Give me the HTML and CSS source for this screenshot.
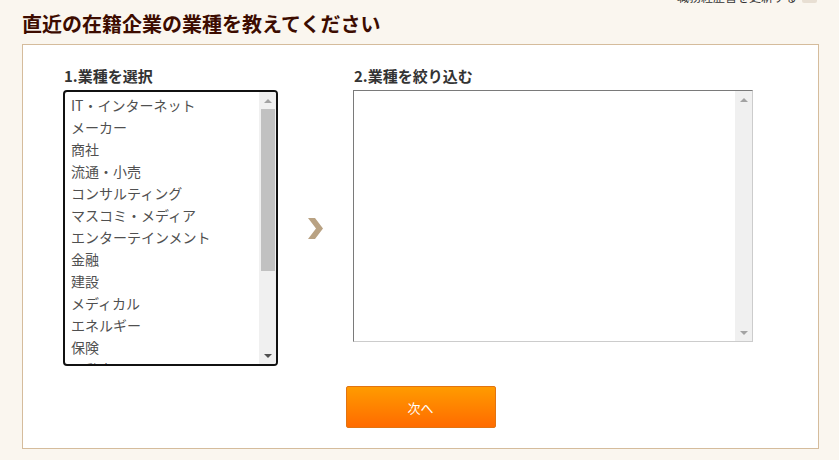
FILE: index.html
```html
<!DOCTYPE html>
<html lang="ja">
<head>
    <meta charset="UTF-8">
    <title>業種選択</title>
    <link rel="stylesheet" href="styles.css">
</head>
<body>
<div class="page">
    <!-- 上部リンク（切れている） -->
    <div class="topnav">
        <span class="topLink">職務経歴書を更新する</span>
        <span class="topIcon"></span>
    </div>
    <h1 class="title">直近の在籍企業の業種を教えてください</h1>

    <div class="panel">
        <div class="selectors">
            <!-- 1.業種 -->
            <div class="col col1">
                <div class="label">1.業種を選択</div>
                <div class="listbox focused">
                    <ul class="options">
                        <li>IT・インターネット</li>
                        <li>メーカー</li>
                        <li>商社</li>
                        <li>流通・小売</li>
                        <li>コンサルティング</li>
                        <li>マスコミ・メディア</li>
                        <li>エンターテインメント</li>
                        <li>金融</li>
                        <li>建設</li>
                        <li>メディカル</li>
                        <li>エネルギー</li>
                        <li>保険</li>
                        <li>不動産</li>
                    </ul>
                    <div class="scrollbar">
                        <div class="sbBtn"><span class="triUp"></span></div>
                        <div class="thumb"></div>
                        <div class="sbTrack"></div>
                        <div class="sbBtn"><span class="triDown dark"></span></div>
                    </div>
                </div>
            </div>

            <!-- 矢印 -->
            <div class="arrow">
                <svg width="15" height="21" viewBox="0 0 15 21">
                    <path d="M0 0 H7 L15 10.5 L7 21 H0 L8 10.5 Z" fill="#b9a283"/>
                </svg>
            </div>

            <!-- 2.絞り込み -->
            <div class="col col2">
                <div class="label">2.業種を絞り込む</div>
                <div class="listbox plain">
                    <ul class="options"></ul>
                    <div class="scrollbar">
                        <div class="sbBtn"><span class="triUp"></span></div>
                        <div class="sbTrack"></div>
                        <div class="sbBtn"><span class="triDown"></span></div>
                    </div>
                </div>
            </div>
        </div>

        <div class="actions">
            <button class="nextBtn">次へ</button>
        </div>
    </div>
</div>
</body>
</html>
```

FILE: styles.css
```css
body{
    margin: 0;
    background: #faf6ef;
    font-family: "Noto Sans CJK JP", "Noto Sans", sans-serif;
    color: #333;
}
.page{
    padding: 0 20px 0 22px;
}
/* 上部リンク */
.topnav{
    height: 3px;
    overflow: hidden;
    display: flex;
    justify-content: flex-end;
    align-items: flex-end;
    gap: 5px;
    padding-right: 2px;
}
.topLink{
    font-size: 12px;
    line-height: 12px;
    color: #333;
}
.topIcon{
    width: 15px;
    height: 16px;
    background: #e8dfd3;
    border-radius: 2px;
}
/* 見出し */
.title{
    margin: 7px 0 6px;
    font-size: 20px;
    line-height: 28px;
    font-weight: bold;
    color: #3d0c00;
}
/* パネル */
.panel{
    width: 795px;
    height: 403px;
    background: #fff;
    border: 1px solid #d5bc9c;
    box-sizing: content-box;
}
.selectors{
    display: flex;
    align-items: flex-start;
    padding: 21px 0 0 40px;
}
.label{
    font-size: 15px;
    line-height: 20px;
    font-weight: bold;
    color: #333;
    margin-bottom: 4px;
    padding-left: 1px;
}
.col1{
    width: 215px;
}
.col2{
    width: 400px;
}
.listbox{
    display: flex;
    background: #fff;
    overflow: hidden;
    box-sizing: border-box;
}
.focused{
    height: 276px;
    border: 2px solid #111;
    border-radius: 4px;
}
.plain{
    height: 252px;
    border: 1px solid #ccc;
    border-top-color: #7a7a7a;
    border-left-color: #7a7a7a;
}
.options{
    flex: 1;
    list-style: none;
    margin: 0;
    padding: 2px 0 0 6px;
    overflow: hidden;
}
.options li{
    font-size: 14px;
    line-height: 22px;
    color: #505050;
    white-space: nowrap;
}
/* スクロールバー */
.scrollbar{
    width: 17px;
    background: #f0f0f0;
    display: flex;
    flex-direction: column;
}
.sbBtn{
    height: 17px;
    display: flex;
    align-items: center;
    justify-content: center;
    flex-shrink: 0;
}
.thumb{
    height: 162px;
    margin: 0 1px 0 2px;
    background: #c1c1c1;
}
.sbTrack{
    flex: 1;
}
.triUp,.triDown{
    width: 0;
    height: 0;
    border-left: 4px solid transparent;
    border-right: 4px solid transparent;
}
.triUp{
    border-bottom: 4px solid #a3a3a3;
}
.triDown{
    border-top: 4px solid #a3a3a3;
}
.triDown.dark{
    border-top-color: #505050;
}
/* 矢印 */
.arrow{
    width: 75px;
    height: 276px;
    margin-top: 24px;
    display: flex;
    align-items: center;
    justify-content: center;
}
/* ボタン */
.actions{
    display: flex;
    justify-content: center;
    padding-top: 20px;
}
.nextBtn{
    width: 150px;
    height: 42px;
    border: 1px solid #e27411;
    border-radius: 2px;
    background: linear-gradient(#ff9b00, #ff6b00);
    color: #fff;
    font-family: "Noto Sans CJK JP", sans-serif;
    font-size: 13px;
    cursor: pointer;
}
```
